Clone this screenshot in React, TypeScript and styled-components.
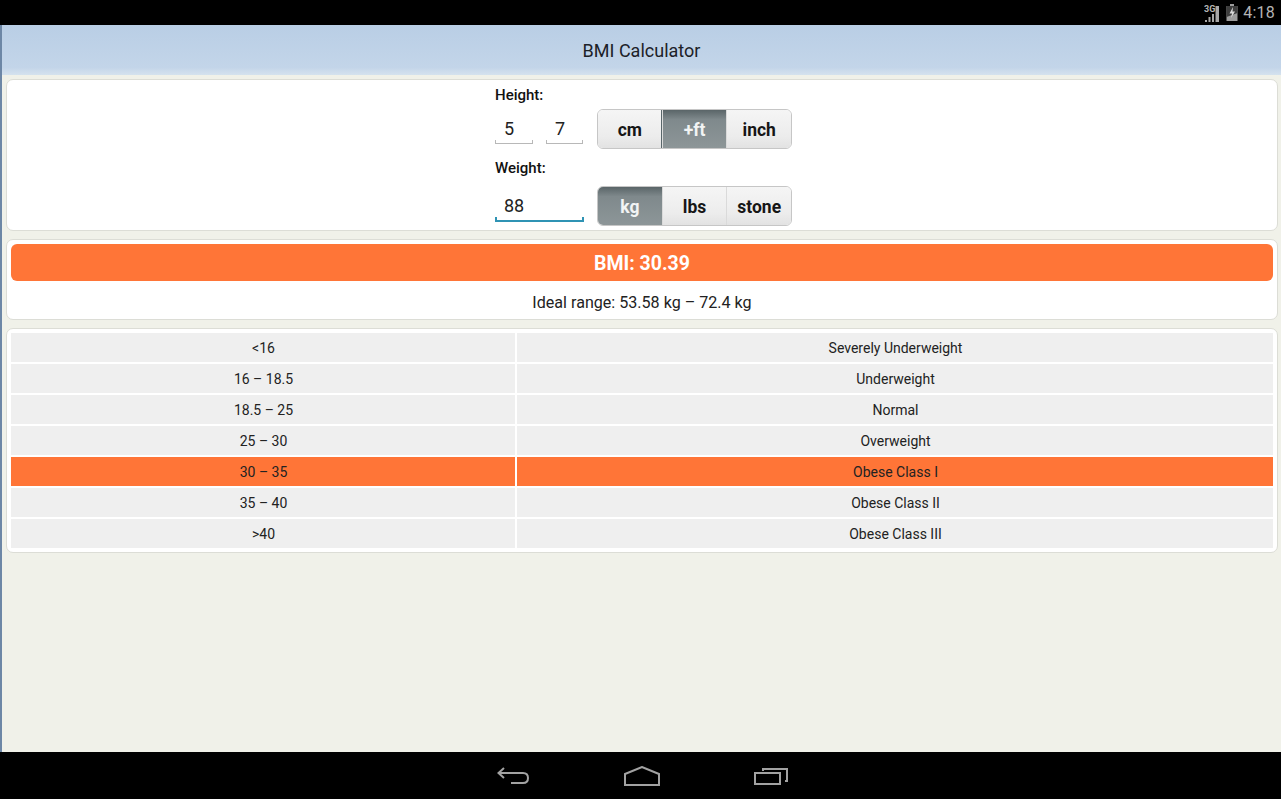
import { Fragment } from 'react';
import styled, { createGlobalStyle } from 'styled-components';

const GlobalStyle = createGlobalStyle`
  html, body {
    margin: 0;
    padding: 0;
    height: 100%;
    overflow: hidden;
    background: #000;
  }
  body {
    font-family: Roboto, "Liberation Sans", sans-serif;
    color: #111;
  }
`

const Screen = styled.div`
  width: 1281px;
  height: 799px;
  display: flex;
  flex-direction: column;
`

const StatusBar = styled.div`
  height: 25px;
  flex: none;
  background: #000;
  display: flex;
  justify-content: flex-end;
  align-items: center;
  padding-right: 6px;
  color: #b4b4b4;
`

const Clock = styled.span`
  font-size: 16px;
  margin-left: 5px;
  letter-spacing: 0.2px;
`

const BatterySvg = styled.svg`
  margin-left: 6px;
`

const AppArea = styled.div`
  flex: 1;
  min-height: 0;
  display: flex;
  flex-direction: column;
  background: #f0f1e9;
  border-left: 2px solid #6d87a6;
`

const Header = styled.header`
  height: 50px;
  flex: none;
  display: flex;
  align-items: center;
  justify-content: center;
  background: linear-gradient(#b9cee5, #c3d5e9 85%, #d5e2ee);
  color: #1c2127;
  font-size: 18px;
  padding-top: 1px;
  box-sizing: border-box;
`

const Content = styled.main`
  display: flex;
  flex-direction: column;
  gap: 8px;
  padding: 4px 3px 0 4px;
`

const Card = styled.section`
  background: #fff;
  border: 1px solid #dcddd6;
  border-radius: 7px;
  box-sizing: border-box;
`

const FormCard = styled(Card)`
  height: 152px;
  display: flex;
  justify-content: center;
`

const Form = styled.div`
  width: 297px;
  margin-left: 3px;
  padding-top: 7px;
`

const FieldLabel = styled.div`
  font-size: 15px;
  font-weight: 500;
  line-height: 16px;
  color: #111;
`

const FieldRow = styled.div<{ $top: number; $bottom: number }>`
  display: flex;
  justify-content: space-between;
  align-items: flex-start;
  margin-top: ${props => props.$top}px;
  margin-bottom: ${props => props.$bottom}px;
`

const Inputs = styled.div`
  display: flex;
  gap: 13px;
  padding-top: 1px;
`

const NumberBox = styled.div<{ $width: number; $active?: boolean }>`
  position: relative;
  width: ${props => props.$width}px;
  height: ${props => props.$active ? 35 : 34}px;
  box-sizing: border-box;
  padding-left: 9px;
  font-size: 18px;
  line-height: 38px;
  color: #222;
  border-bottom: ${props => props.$active ? '2px solid #2f93b4' : '1px solid #b8b8b8'};

  &::before, &::after {
    content: '';
    position: absolute;
    bottom: 0;
    width: ${props => props.$active ? 2 : 1}px;
    height: 3px;
    background: ${props => props.$active ? '#2f93b4' : '#b8b8b8'};
  }
  &::before { left: 0; }
  &::after { right: 0; }
`

const Segments = styled.div`
  display: flex;
  width: 195px;
  height: 40px;
  box-sizing: border-box;
  border: 1px solid #c6c6c6;
  border-radius: 6px;
  overflow: hidden;
`

const Segment = styled.div<{ $on?: boolean }>`
  flex: 1;
  position: relative;
  display: flex;
  align-items: center;
  justify-content: center;
  font-size: 17.5px;
  font-weight: 700;
  padding-top: 1px;
  color: ${props => props.$on ? '#f2f4f4' : '#161616'};
  background: ${props => props.$on
    ? 'linear-gradient(#5a6568, #7f898c 25%, #8d9698)'
    : 'linear-gradient(#f5f5f5, #ececec 70%, #e2e2e2)'};
  box-shadow: ${props => props.$on ? '0 0 0 1px #59666a' : 'none'};

  & + & {
    border-left: 1px solid #dadada;
  }
`

const ResultCard = styled(Card)`
  height: 81px;
  padding: 4px;
`

const BmiBar = styled.div`
  height: 37px;
  border-radius: 6px;
  background: #ff7537;
  color: #fff;
  font-size: 19.5px;
  font-weight: 700;
  padding-top: 1px;
  box-sizing: border-box;
  display: flex;
  align-items: center;
  justify-content: center;
`

const Ideal = styled.div`
  font-size: 16.1px;
  color: #222;
  text-align: center;
  margin-top: 12px;
  line-height: 20px;
`

const TableCard = styled(Card)`
  height: 225px;
  padding: 4px 4px 0 4px;
`

const RangeTable = styled.div`
  display: grid;
  grid-template-columns: 504px 1fr;
  grid-auto-rows: 29px;
  gap: 2px;
`

const Cell = styled.div<{ $hit?: boolean }>`
  display: flex;
  align-items: center;
  justify-content: center;
  font-size: 14px;
  color: #222;
  padding-left: 1px;
  background: ${props => props.$hit ? '#ff7537' : '#efefef'};
`

const NavBar = styled.nav`
  height: 47px;
  flex: none;
  background: #000;
  display: flex;
  justify-content: center;
  align-items: center;
  gap: 94px;
  padding-left: 3px;
`

const NavIcon = styled.svg`
  display: block;
  fill: none;
  stroke: #a2a2a2;
  stroke-width: 2;
`

const ranges = [
  ['<16', 'Severely Underweight'],
  ['16 – 18.5', 'Underweight'],
  ['18.5 – 25', 'Normal'],
  ['25 – 30', 'Overweight'],
  ['30 – 35', 'Obese Class I'],
  ['35 – 40', 'Obese Class II'],
  ['>40', 'Obese Class III'],
]

const SignalIcon = () => (
  <svg width="16" height="18" viewBox="0 0 16 18">
    <text x="0" y="8" fontSize="9" fontWeight="700" fontFamily="Roboto, sans-serif" fill="#b4b4b4">3G</text>
    <path d="M1 18h2v-2H1zM4.500 18h2v-5h-2zM8 18h2v-8H8zM11.500 18H15V2h-3.500z" fill="#a8a8a8" />
  </svg>
)

const BatteryIcon = () => (
  <BatterySvg width="12" height="17" viewBox="0 0 12 17">
    <path d="M4 0h4v2h3.500v15H.5V2H4z" fill="#9c9c9c" />
    <path d="M.5 2h11v7L.5 13z" fill="#3d3d3d" />
    <path d="M7 3 3.500 9.500h2.500L5 14l4-6.500H6.500z" fill="#d8d8d8" />
  </BatterySvg>
)

const BackIcon = () => (
  <NavIcon width="33" height="17" viewBox="0 0 33 17">
    <path d="M7 1 1.500 6 7 11M1.500 6H26c3 0 5 2 5 5s-2 5-5 5H14" />
  </NavIcon>
)

const HomeIcon = () => (
  <NavIcon width="36" height="20" viewBox="0 0 36 20">
    <path d="M1 8 18 1l17 7v11H1z" />
  </NavIcon>
)

const RecentIcon = () => (
  <NavIcon width="34" height="18" viewBox="0 0 34 18">
    <path d="M1 6h25v11H1z" />
    <path d="M9 4V2h24v12h-2" />
  </NavIcon>
)

export default function App() {
  return (
    <Screen>
      <GlobalStyle />
      <StatusBar>
        <SignalIcon />
        <BatteryIcon />
        <Clock>4:18</Clock>
      </StatusBar>
      <AppArea>
        <Header>BMI Calculator</Header>
        <Content>
          <FormCard>
            <Form>
              <FieldLabel>Height:</FieldLabel>
              <FieldRow $top={6} $bottom={11}>
                <Inputs>
                  <NumberBox $width={38}>5</NumberBox>
                  <NumberBox $width={37}>7</NumberBox>
                </Inputs>
                <Segments>
                  <Segment>cm</Segment>
                  <Segment $on>+ft</Segment>
                  <Segment>inch</Segment>
                </Segments>
              </FieldRow>
              <FieldLabel>Weight:</FieldLabel>
              <FieldRow $top={10} $bottom={0}>
                <Inputs>
                  <NumberBox $width={89} $active>88</NumberBox>
                </Inputs>
                <Segments>
                  <Segment $on>kg</Segment>
                  <Segment>lbs</Segment>
                  <Segment>stone</Segment>
                </Segments>
              </FieldRow>
            </Form>
          </FormCard>
          <ResultCard>
            <BmiBar>BMI: 30.39</BmiBar>
            <Ideal>Ideal range: 53.58 kg – 72.4 kg</Ideal>
          </ResultCard>
          <TableCard>
            <RangeTable>
              {ranges.map(([range, label]) => (
                <Fragment key={range}>
                  <Cell $hit={range === '30 – 35'}>{range}</Cell>
                  <Cell $hit={range === '30 – 35'}>{label}</Cell>
                </Fragment>
              ))}
            </RangeTable>
          </TableCard>
        </Content>
      </AppArea>
      <NavBar>
        <BackIcon />
        <HomeIcon />
        <RecentIcon />
      </NavBar>
    </Screen>
  )
}
